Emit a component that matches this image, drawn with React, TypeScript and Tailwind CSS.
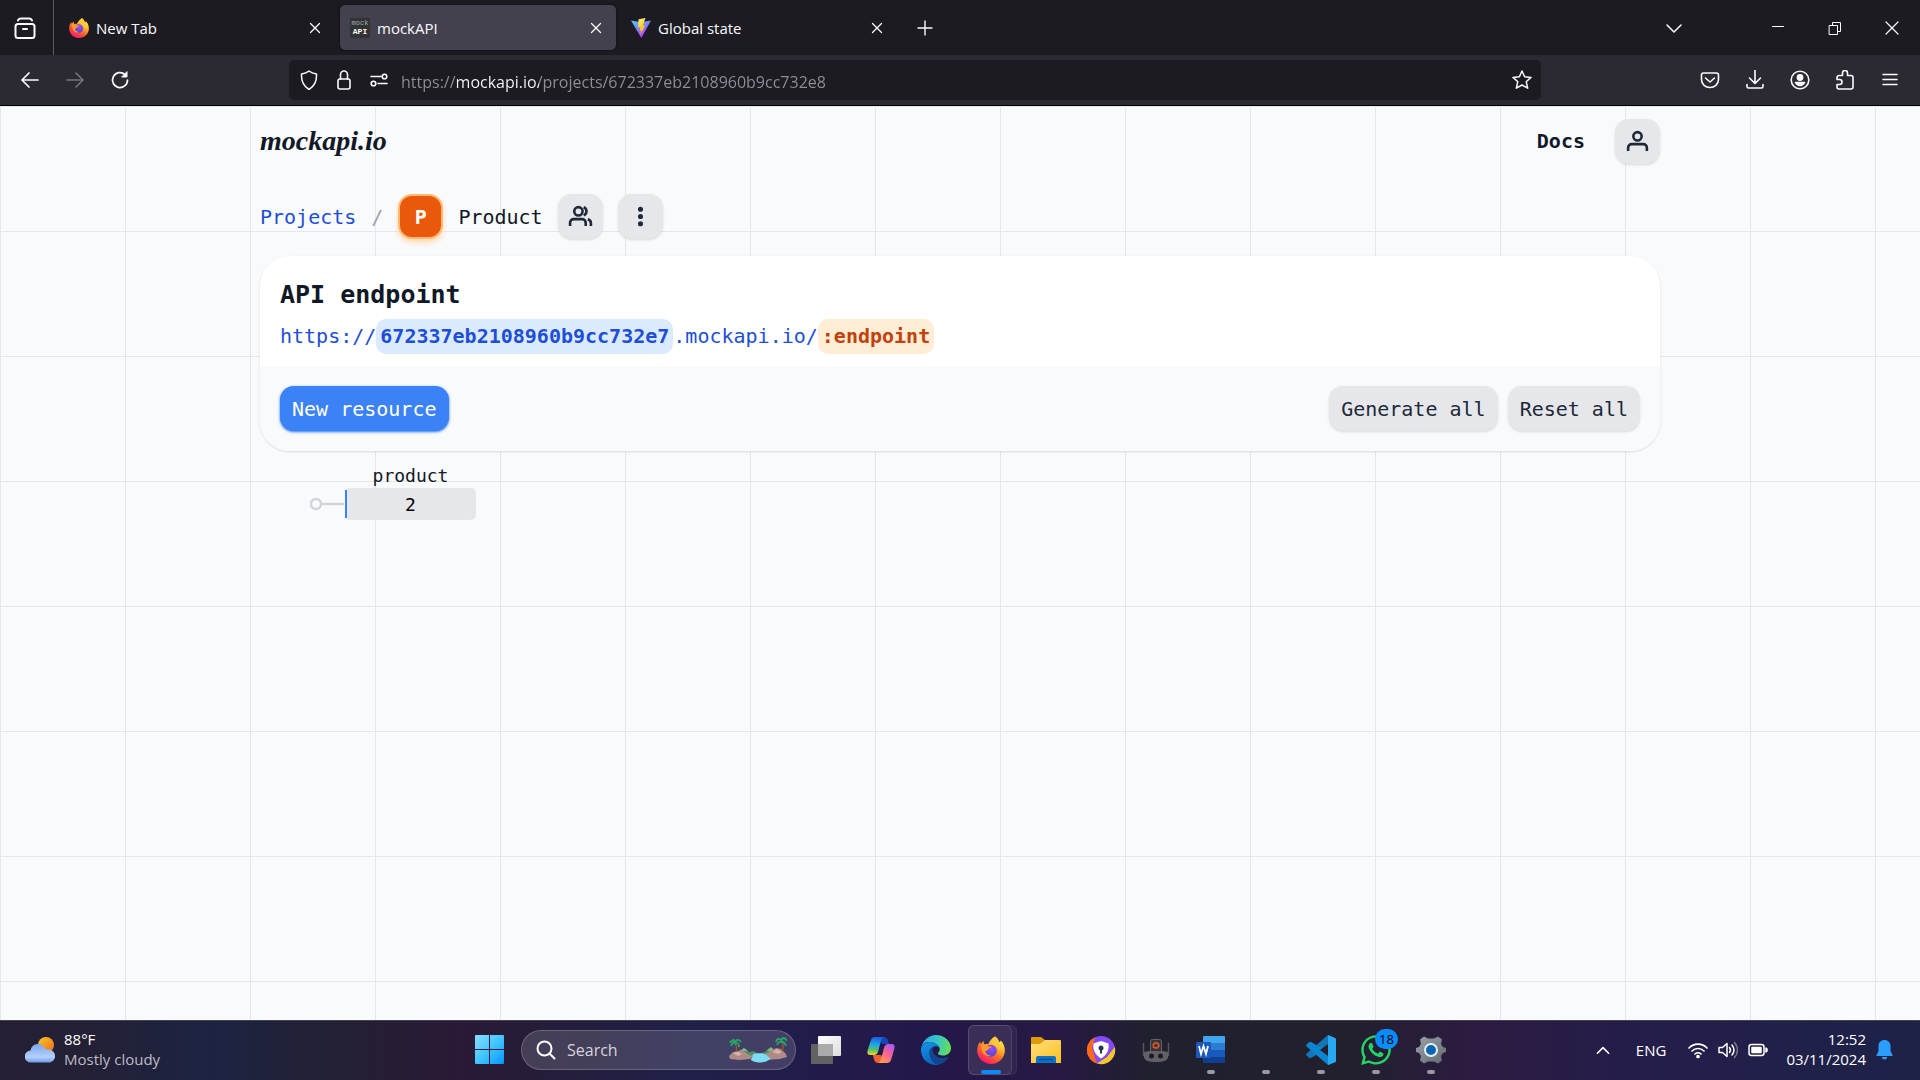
import type { ReactNode } from 'react';
import { FaWhatsapp } from 'react-icons/fa';

const ui = 'font-["Open_Sans","Noto_Sans",sans-serif]';
const mono = 'font-["DejaVu_Sans_Mono","Liberation_Mono",monospace]';

function Line({ children, className = 'size-5', width = 1.5 }: { children: ReactNode; className?: string; width?: number }) {
  return (
    <svg viewBox="0 0 20 20" className={className} fill="none" stroke="currentColor" strokeWidth={width} strokeLinecap="round" strokeLinejoin="round" aria-hidden="true">
      {children}
    </svg>
  );
}

function Firefox({ id, className }: { id: string; className: string }) {
  return (
    <svg viewBox="0 0 28 28" className={className} aria-hidden="true">
      <defs>
        <linearGradient id={`${id}-a`} x1="0.8" y1="0.05" x2="0.25" y2="0.95">
          <stop offset="0" stopColor="#fff44f" />
          <stop offset="0.3" stopColor="#ffbd2e" />
          <stop offset="0.6" stopColor="#ff6a2a" />
          <stop offset="1" stopColor="#f5156c" />
        </linearGradient>
        <radialGradient id={`${id}-b`} cx="0.55" cy="0.3" r="0.7">
          <stop offset="0" stopColor="#a347f5" />
          <stop offset="1" stopColor="#4a4ad0" />
        </radialGradient>
      </defs>
      <path fill={`url(#${id}-a)`} d="M18 0.5c2.400 1.400 3.600 3.400 4 5.600 1.200-.2 1.600-1 1.800-1.600C26.600 7.500 28 11 27.800 15 27.500 22.200 21.600 28 14 28 6.200 28 .2 22 .2 14.600.2 11 1.300 8.200 3.200 5.600L3.600 8.200 6.400 5 7.200 8.400c1.200-.4 2.600-.6 4-.2 1.400-2.800 3.200-5.800 6.800-7.700z" />
      <circle cx="13.800" cy="14.800" r="6" fill={`url(#${id}-b)`} />
      <path fill="#ff9a2a" d="M4.200 8.600c3-.8 5.400.2 7 1.800l3.400.2c-.4 1.400-2 2-3.400 2.400-.6 1.400-1.800 2-3 2.200.6 3 3.400 4.600 6.200 4.200-4.800 2.400-10.600-1-10.200-10.800z" />
      <path fill="#ffc83a" d="M18 .5c2.400 1.400 3.600 3.600 4 6.200 1.200 2.200 1.600 5.600.2 8.600-.6-3.400-2.200-5.200-4.800-6.600-3-1.600-2-5.400.6-8.200z" />
    </svg>
  );
}

function Vite() {
  return (
    <svg viewBox="0 0 20 20" className="size-5" aria-hidden="true">
      <defs>
        <linearGradient id="vite-a" x1="0" y1="0" x2="0.6" y2="1">
          <stop offset="0" stopColor="#41d1ff" />
          <stop offset="1" stopColor="#bd34fe" />
        </linearGradient>
        <linearGradient id="vite-b" x1="0.4" y1="0" x2="0.6" y2="1">
          <stop offset="0" stopColor="#ffea83" />
          <stop offset="0.3" stopColor="#ffdd35" />
          <stop offset="1" stopColor="#ffa800" />
        </linearGradient>
      </defs>
      <path fill="url(#vite-a)" d="M0 2.500 10 4.200 20 2.500 10.300 20z" />
      <path fill="url(#vite-b)" d="M14.500 0 7.600 1.300 7 9.600l2.400-.5-.8 4 1.600-.5-1 4.400 4.900-9.500-2.400.4z" />
    </svg>
  );
}

function Tab({ icon, title, active = false }: { icon: ReactNode; title: string; active?: boolean }) {
  return (
    <div className={`flex h-[45px] w-[276px] items-center rounded-[5px] pr-2.5 pl-2.5 ${active ? 'bg-[#42414d] shadow-[0_0_3px_rgba(0,0,0,0.6)]' : ''}`}>
      <button type="button" className="flex min-w-0 flex-1 items-center gap-[7px] text-left text-[15px] leading-5">
        {icon}
        <span>{title}</span>
      </button>
      <button type="button" aria-label={`Close ${title}`} className="flex size-5 items-center justify-center">
        <Line className="size-5" width={1.300}><path d="m5.500 5.500 9 9m0-9-9 9" /></Line>
      </button>
    </div>
  );
}

function Chrome() {
  return (
    <header className={`${ui} border-b border-black bg-[#2b2a33] text-[#fbfbfe]`}>
      <div className="flex h-[55px] items-center bg-[#1c1b22]">
        <button type="button" aria-label="Firefox View" className="flex h-full w-[54px] items-center justify-center border-r border-[#5b5a63] pr-1">
          <svg viewBox="0 0 22 22" className="size-[22px]" fill="none" stroke="currentColor" strokeWidth="2" strokeLinecap="round" aria-hidden="true">
            <rect x="1.500" y="7" width="19" height="14" rx="2.500" />
            <path d="M4 3.500C4.500 2 5.500 1.500 7 1.500h8c1.500 0 2.500.5 3 2M9 12h4" />
          </svg>
        </button>
        <div className="flex flex-1 items-center gap-[5px] pl-[5px]">
          <Tab title="New Tab" icon={<Firefox id="tab-fox" className="size-5" />} />
          <Tab
            title="mockAPI"
            active
            icon={
              <span className="flex size-5 flex-col items-center justify-center bg-[#333] font-['Liberation_Mono',monospace] text-[8px] leading-[9px]">
                <span className="text-[7px] leading-[8px] text-[#9bb0b8]">mock</span>
                <b>API</b>
              </span>
            }
          />
          <Tab title="Global state" icon={<Vite />} />
          <button type="button" aria-label="New tab" className="ml-2 flex size-[30px] items-center justify-center">
            <Line width={1.400}><path d="M10 3v14M3 10h14" /></Line>
          </button>
        </div>
        <button type="button" aria-label="List all tabs" className="mr-[55px] flex w-10 justify-center">
          <Line><path d="m3 7 7 7 7-7" /></Line>
        </button>
        <button type="button" aria-label="Minimize" className="flex w-[57px] justify-center">
          <Line className="size-5" width={1}><path d="M4.500 8.500h11" /></Line>
        </button>
        <button type="button" aria-label="Restore" className="flex w-[57px] justify-center">
          <Line width={1}><path d="M4.500 7.500h8v9h-8zM7.500 7.500v-3h8v9h-3" /></Line>
        </button>
        <button type="button" aria-label="Close window" className="flex w-[57px] justify-center">
          <Line width={1.200}><path d="m4 4 12 12M16 4 4 16" /></Line>
        </button>
      </div>
      <div className="flex h-[50px] items-center">
        <nav className="flex w-[289px] items-center gap-[25px] pl-5" aria-label="History">
          <button type="button" aria-label="Back"><Line width={1.700}><path d="M18 10H2m7-7-7 7 7 7" /></Line></button>
          <button type="button" aria-label="Forward" className="text-[#77767e]"><Line><path d="M2 10h16m-7-7 7 7-7 7" /></Line></button>
          <button type="button" aria-label="Reload"><Line width={1.700}><path d="M15 4.500A7.500 7.500 0 1 0 17.500 10" /><path fill="currentColor" d="M17 2v5h-5z" strokeWidth="1" /></Line></button>
        </nav>
        <div className="flex h-10 flex-1 items-center rounded-[5px] bg-[#1c1b22] pr-[9px] pl-2.5">
          <div className="flex gap-[15px]">
            <Line><path d="M10 1c2 1.700 4.500 2.500 7.500 3 .3 6-1.500 12-7.500 15.500C4 16 2.200 10 2.500 4 5.500 3.500 8 2.700 10 1z" /></Line>
            <Line width={1.600}><rect x="4" y="9" width="12" height="10" rx="2" /><path d="M6.500 9V4.500a3.500 3.500 0 0 1 7 0V9" /></Line>
            <Line width={1.600}><path d="M2 6.500h10M18 13.500H9" /><circle cx="15.500" cy="6.500" r="2.300" /><circle cx="4.500" cy="13.500" r="2.300" /></Line>
          </div>
          <input
            aria-label="Address"
            defaultValue="https://mockapi.io/projects/672337eb2108960b9cc732e8"
            className="ml-3 min-w-0 flex-1 bg-[linear-gradient(90deg,#8f8f98_56px,#fbfbfe_56px,#fbfbfe_138px,#8f8f98_138px)] bg-clip-text pt-[3px] text-base leading-5 text-transparent outline-none"
          />
          <button type="button" aria-label="Bookmark this page">
            <Line><path d="m10 1 2.600 5.800 6.400.6-4.800 4.300 1.500 6.500L10 15l-5.700 3.200 1.500-6.500L1 7.400l6.400-.6z" /></Line>
          </button>
        </div>
        <div className="flex w-[379px] justify-end gap-[25px] pr-5">
          <button type="button" aria-label="Save to Pocket"><Line width={1.600}><path d="M3.500 3h13c1 0 2 .8 2 2v4.500c0 5-4 8-8.500 8s-8.500-3-8.500-8V5c0-1.200 1-2 2-2z" /><path d="m5.500 8 4.500 4 4.500-4" /></Line></button>
          <button type="button" aria-label="Downloads"><Line width={1.600}><path d="M10 0v13M4.500 8 10 13.500 15.500 8M2 14.500v2c0 1 .5 1.500 1.500 1.500h13c1 0 1.500-.5 1.500-1.500v-2" /></Line></button>
          <button type="button" aria-label="Account"><Line width={1.600}><circle cx="10" cy="10" r="8.800" /><circle cx="10" cy="7.500" r="2.600" fill="currentColor" /><path fill="currentColor" d="M5.500 12.500h9c-1 2.200-2.700 3-4.500 3s-3.500-.8-4.500-3z" /></Line></button>
          <button type="button" aria-label="Extensions"><Line width={1.600}><path d="M4 5.500h3.500V3a2.500 2.500 0 0 1 5 0v2.500H16a2 2 0 0 1 2 2V17a2 2 0 0 1-2 2H4a2 2 0 0 1-2-2v-2.500h2.500a2 2 0 0 0 0-5H2v-2a2 2 0 0 1 2-2z" /></Line></button>
          <button type="button" aria-label="Menu"><Line width={1.500}><path d="M3 4.500h14M3 9.500h14M3 14.500h14" /></Line></button>
        </div>
      </div>
    </header>
  );
}

function SquareButton({ label, children }: { label: string; children: ReactNode }) {
  return (
    <button type="button" aria-label={label} className="flex size-[45px] shrink-0 items-center justify-center rounded-[14px] bg-[#e5e7eb] text-[#1f2937] shadow">
      <svg viewBox="0 0 24 24" className="size-[25px]" fill="none" stroke="currentColor" strokeWidth="2.500" aria-hidden="true">
        {children}
      </svg>
    </button>
  );
}

function GrayButton({ children }: { children: string }) {
  return <button type="button" className="h-[45px] rounded-[14px] bg-[#e5e7eb] px-3 text-[#1f2937] shadow">{children}</button>;
}

function Page() {
  return (
    <main className={`${mono} flex-1 bg-[#f9fafc] bg-[linear-gradient(to_right,#e5e7eb_1px,transparent_1px),linear-gradient(to_bottom,#e5e7eb_1px,transparent_1px)] bg-[size:125px_125px] text-[20px] leading-[30px] text-[#111827]`}>
      <div className="mx-auto max-w-[1400px]">
        <div className="flex h-[70px] items-center justify-between">
          <a href="#home" className="font-['Liberation_Serif',serif] text-[28px] leading-9 font-bold italic">mockapi.io</a>
          <nav className="flex items-center gap-[30px]">
            <a href="#docs" className="font-bold">Docs</a>
            <SquareButton label="Profile">
              <circle cx="12" cy="7" r="4" />
              <path d="M3 21v-3a3.500 3.500 0 0 1 3.500-3.500h11a3.500 3.500 0 0 1 3.500 3.500v3" />
            </SquareButton>
          </nav>
        </div>
        <div className="flex items-center gap-[15px] pt-[18px] pb-[17px]">
          <a href="#projects" className="text-[#1d4ed8]">Projects</a>
          <span className="text-[#9ca3af]">/</span>
          <span className="flex size-[45px] items-center justify-center rounded-[14px] border-2 border-[#fdba74] bg-[#ea580c] font-bold text-white shadow-md shadow-[#fed7aa]">P</span>
          <span>Product</span>
          <SquareButton label="Collaborators">
            <circle cx="10" cy="7" r="4" />
            <path d="M2 21v-3a3.500 3.500 0 0 1 3.500-3.500h8A3.500 3.500 0 0 1 17 18v3M15 3.200a4 4 0 0 1 0 7.600M19 14.700a4 4 0 0 1 3 3.800V21" />
          </SquareButton>
          <SquareButton label="More options">
            <circle cx="12" cy="5" r="1.200" />
            <circle cx="12" cy="12" r="1.200" />
            <circle cx="12" cy="19" r="1.200" />
          </SquareButton>
        </div>
        <section className="overflow-hidden rounded-[30px] bg-white shadow">
          <div className="px-5 pt-[21px] pb-3">
            <h1 className="mb-[7px] text-[25px] leading-[35px] font-bold">API endpoint</h1>
            <p className="flex items-center leading-[35px] text-[#1d4ed8]">
              <span>https://</span>
              <b className="rounded-[10px] bg-[#dbeafe] px-1">672337eb2108960b9cc732e7</b>
              <span>.mockapi.io/</span>
              <b className="rounded-[10px] bg-[#ffedd5] px-1 text-[#c2410c]">:endpoint</b>
            </p>
          </div>
          <div className="flex gap-2.5 bg-[#f9fafc] p-5">
            <button type="button" className="mr-auto h-[45px] rounded-[14px] bg-[#3b82f6] px-3 text-white shadow shadow-[#3b82f6]">New resource</button>
            <GrayButton>Generate all</GrayButton>
            <GrayButton>Reset all</GrayButton>
          </div>
        </section>
        <div className="flex items-end pt-[12px] pl-[50px] text-[18px] leading-[25px]">
          <svg viewBox="0 0 35 32" className="h-8 w-[35px]" fill="none" stroke="#d1d5db" strokeWidth="2.500" aria-hidden="true">
            <circle cx="6" cy="16" r="5" />
            <path d="M11 16h23" />
          </svg>
          <div className="flex w-[131px] flex-col text-center">
            <span>product</span>
            <button type="button" className="flex h-8 items-center rounded-[5px] bg-[#e5e7eb] text-black">
              <span className="h-7 w-0.5 bg-[#3b82f6]" />
              <span className="flex-1 pr-0.5">2</span>
            </button>
          </div>
        </div>
      </div>
    </main>
  );
}

function TaskbarApp({ label, dot = false, children }: { label: string; dot?: boolean; children?: ReactNode }) {
  return (
    <button type="button" aria-label={label} className="relative flex h-[50px] w-[55px] items-center justify-center">
      <svg viewBox="0 0 30 30" className="size-[30px]" aria-hidden="true">{children}</svg>
      {dot && <span className="absolute bottom-[1px] h-1 w-2 rounded-full bg-[#9a98a3]" />}
    </button>
  );
}

function Palms() {
  return (
    <svg viewBox="0 0 58 26" className="h-[26px] w-[58px]" aria-hidden="true">
      <path fill="#4f8f63" d="M10 16l5-5 5 4 5-1 4 3 7-2 4-4 6 4v6H10z" />
      <path fill="#7dbb88" d="M11 14l4-3 4 3zM38 14l4-4 4 4z" />
      <path fill="#b08a88" d="M0 19l4-4 3 1 4-3 5 2 4 3 4 1-3 3-11 1-9-1zM34 20l4-4 4-2 5-3 5 1 5 5 1 3-7 2-15 1z" />
      <path fill="#d9b3a6" d="M4 16l4-2 5 3-4 2zM43 15l5-3 5 3-4 2z" />
      <path fill="#7fdcf4" d="M24 17c3-1 9-1 12 0l5 4c2 1-3 4-9 4.500-6 0-11-2-10-3.500 2-1.500 1-3 2-5z" />
      <path d="M7 15C8 11 8 8 6 5M53 14c2-4 1-8-1-11" stroke="#96562e" strokeWidth="1.500" fill="none" />
      <path d="M1 6c1-3 4-3 5 0 1-4 4-4 6-1M2 9c1-3 3-4 4-3 2-1 4 0 4 4M6 5 4 2M47 5c1-4 4-4 5-1 1-4 4-4 6 0M48 8c1-3 3-4 4-3 2-1 4 1 5 4M52 4l2-3" stroke="#25a567" strokeWidth="1.800" fill="none" />
    </svg>
  );
}

function Taskbar() {
  return (
    <footer className={`${ui} grid h-[60px] grid-cols-[1fr_auto_1fr] items-center border-t border-[#43434e] bg-[linear-gradient(90deg,#241f33_0%,#242035_4%,#1c2342_11%,#242033_18%,#291a37_24%,#241e3c_30%,#20204a_36%,#24184a_48%,#271944_55%,#20202e_60%,#22202d_70%,#2c1b42_77%,#241d49_85%,#21204a_92%,#1d2247_100%)] pb-0.5 text-[15px] leading-5 text-white`}>
      <button type="button" className="flex items-center gap-[9px] justify-self-start pl-[25px] text-left">
        <svg viewBox="0 0 30 26" className="h-[26px] w-[30px]" aria-hidden="true">
          <defs>
            <linearGradient id="sun" x1="0" y1="0" x2="1" y2="1"><stop offset="0" stopColor="#f8c62d" /><stop offset="1" stopColor="#ee6a16" /></linearGradient>
            <linearGradient id="cloud" x1="0" y1="0" x2="0" y2="1"><stop offset="0" stopColor="#7ca5f0" /><stop offset="0.7" stopColor="#b4d0fb" /><stop offset="1" stopColor="#6f9bec" /></linearGradient>
          </defs>
          <circle cx="21" cy="8" r="8" fill="url(#sun)" />
          <path fill="url(#cloud)" d="M6 25.500a6 6 0 0 1-.5-12C6.500 9 9.500 7 13 7c4 0 6.500 2.500 7.500 5.500 5-1 9.500 2 9.500 6.500 0 4-3 6.500-6 6.500z" />
        </svg>
        <span className="flex flex-col pb-0.5">
          <span>88°F</span>
          <span className="text-[#bdbbc4]">Mostly cloudy</span>
        </span>
      </button>
      <nav className="flex items-center" aria-label="Taskbar">
        <button type="button" aria-label="Start" className="mr-[17px] ml-[13px]">
          <svg viewBox="0 0 29 29" className="size-[29px]" aria-hidden="true">
            <defs><linearGradient id="win" x1="0" y1="0" x2="1" y2="1"><stop offset="0" stopColor="#86e0ff" /><stop offset="0.5" stopColor="#42c5ff" /><stop offset="1" stopColor="#0794ff" /></linearGradient></defs>
            <path fill="url(#win)" d="M0 1q0-1 1-1h13v14H0zM15 0h13q1 0 1 1v13H15zM0 15h14v14H1q-1 0-1-1zM15 15h14v13q0 1-1 1H15z" />
          </svg>
        </button>
        <label className="mr-0.5 flex h-10 w-[275px] items-center rounded-full border border-white/20 bg-white/15 pr-2 pl-3.5">
          <Line className="size-5 shrink-0" width={2}><circle cx="8.500" cy="8.500" r="7" /><path d="m13.500 13.500 5 5" /></Line>
          <input type="search" placeholder="Search" aria-label="Search" className="ml-[11px] w-full min-w-0 flex-1 text-base leading-5 outline-none placeholder:text-[#d6d4de]" />
          <Palms />
        </label>
        <TaskbarApp label="Task view">
          <defs><linearGradient id="tv" x1="0" y1="0" x2="1" y2="1"><stop offset="0" stopColor="#fff" /><stop offset="1" stopColor="#ddd" /></linearGradient></defs>
          <rect x="7" y="1" width="23" height="20" rx="1" fill="url(#tv)" />
          <rect x="0" y="9" width="22" height="20" rx="1" fill="#626262" />
          <path fill="#aaa" d="M7 9h15v12H7z" />
        </TaskbarApp>
        <TaskbarApp label="Copilot">
          <defs>
            <linearGradient id="cp1" x1="0.3" y1="0" x2="0.2" y2="1"><stop offset="0" stopColor="#1b5fe0" /><stop offset="0.4" stopColor="#20a6e8" /><stop offset="0.7" stopColor="#50c46a" /><stop offset="1" stopColor="#ffd21e" /></linearGradient>
            <linearGradient id="cp2" x1="0.8" y1="0" x2="0.2" y2="1"><stop offset="0" stopColor="#a35cf5" /><stop offset="0.4" stopColor="#f15c9c" /><stop offset="1" stopColor="#ffa04a" /></linearGradient>
          </defs>
          <path fill="#1846b8" d="M13 2h5c3 0 4 3 5 7h-7z" />
          <path fill="url(#cp1)" d="M8 2h10c-3 1-3 5-5 11-1 5-2 7-5 7H4c-3 0-3-3-2-6l3-9q1-3 3-3z" />
          <path fill="#f0602c" d="M7 20h8l3 8h-6c-3 0-4-3-5-8z" />
          <path fill="url(#cp2)" d="M22 9h4c3 0 3 3 2 6l-3 10q-1 3-4 3h-9c3-1 3-5 5-11 1-5 2-8 5-8z" />
        </TaskbarApp>
        <TaskbarApp label="Edge">
          <defs>
            <linearGradient id="ed1" x1="0" y1="0.3" x2="1" y2="0.5"><stop offset="0" stopColor="#2aa9ea" /><stop offset="0.5" stopColor="#35c5c8" /><stop offset="1" stopColor="#66df55" /></linearGradient>
            <linearGradient id="ed2" x1="0" y1="0" x2="0.5" y2="1"><stop offset="0" stopColor="#1597e5" /><stop offset="1" stopColor="#0b62bd" /></linearGradient>
          </defs>
          <path fill="url(#ed1)" d="M.5 12C2 5 8 0 15 0c9 0 15 7 15 13 0 5-4 7.500-8 7.500-3 0-5.500-1-5-2.500 1.500-1.500 2-3 1.500-5C17 9 12 7 8 7 4 7 1.500 9 .5 12z" />
          <path fill="url(#ed2)" d="M0 15c0-5 4-8 9-8 5 0 9 3 9.500 6-1-1.500-3-2-5-1.500-6 2-6 9-2.500 13.500 2 3 5 4.500 8 4.500C9 32 0 25 0 15z" />
          <path fill="#10458f" d="M8.500 17c0-3 2-5 4.500-5.500-2 2-1.500 5 0 7.500 3 4.500 9 5 14 2.500C27 25 21 30 16 29.500 11 27 8.500 22 8.500 17z" />
        </TaskbarApp>
        <button type="button" aria-label="Firefox" className="relative flex h-[50px] w-[55px] items-center justify-center">
          <span className="absolute inset-y-0 left-[5px] w-[49px] rounded-md border border-white/5 bg-white/5" />
          <span className="absolute inset-y-0 left-[5px] w-11 rounded-md border border-white/10 bg-white/5" />
          <Firefox id="task-fox" className="relative size-7" />
          <span className="absolute bottom-[1px] h-1 w-5 rounded-full bg-[#0b8bff]" />
        </button>
        <TaskbarApp label="File Explorer">
          <defs><linearGradient id="fe" x1="0" y1="0" x2="1" y2="1"><stop offset="0" stopColor="#ffdf79" /><stop offset="1" stopColor="#fcc022" /></linearGradient></defs>
          <path fill="#dd9a0a" d="M0 3q0-1 1-1h9l4 3v4H0z" />
          <path fill="url(#fe)" d="M0 9h9l5-4h15q1 0 1 1v22H0z" />
          <path fill="#0b74c8" d="M5 28v-5q0-2 2-2h16q2 0 2 2v5z" />
          <path stroke="#064c8d" strokeWidth="1.500" d="M8 24.500h14" />
        </TaskbarApp>
        <TaskbarApp label="Secure Browser">
          <circle cx="15" cy="15" r="14" fill="#854af4" />
          <path fill="#ff6a13" d="M9 2.300A14 14 0 0 0 11 28.500L8 20 6 13z" />
          <path fill="#f6c62a" d="M28.800 12A14 14 0 0 1 11 28.500L21 22z" />
          <path fill="#fff" d="M15 6l7.500 2.500c.8 6-1 11-7.500 15-6.500-4-8.300-9-7.500-15z" />
          <circle cx="15" cy="13" r="2.500" fill="#27364d" />
          <path stroke="#27364d" strokeWidth="2" d="M15 13v5.500" />
        </TaskbarApp>
        <TaskbarApp label="Robot utility">
          <path fill="none" stroke="#55555c" strokeWidth="1.500" d="M2.500 8v13M27.500 8v13" />
          <path fill="#333238" stroke="#66666d" d="M9.500 17V6.500q0-2 2-2h7q2 0 2 2V17z" />
          <circle cx="15" cy="10.500" r="2.500" fill="none" stroke="#d7592b" strokeWidth="1.500" />
          <circle cx="15" cy="10.500" r="3.600" fill="none" stroke="#d7592b" strokeDasharray="1.200 1.600" />
          <path fill="#606066" d="M3 17l5-1h14l5 1v5c0 3-4 5-12 5S3 25 3 22z" />
          <circle cx="10.500" cy="21" r="2.500" fill="#1c1b24" />
          <circle cx="19.500" cy="21" r="2.500" fill="#1c1b24" />
        </TaskbarApp>
        <TaskbarApp label="Word" dot>
          <path fill="#41a5ee" d="M7 2q0-1 1-1h20q1 0 1 1v6H7z" />
          <path fill="#2b7cd3" d="M7 8h22v7H7z" />
          <path fill="#185abd" d="M7 15h22v7H7z" />
          <path fill="#103f91" d="M7 22h22v5q0 1-1 1H8q-1 0-1-1z" />
          <rect y="7" width="15" height="16" rx="1" fill="#1c58bc" />
          <path d="m3 11 2 8 2.500-8 2.500 8 2-8" fill="none" stroke="#fff" strokeWidth="1.800" />
        </TaskbarApp>
        <TaskbarApp label="Background app" dot />
        <TaskbarApp label="Visual Studio Code" dot>
          <path fill="#1475b8" d="M22 0l8 3.500v5L5 23q-1 .6-2-.2L.6 20.500q-1-1 0-2z" />
          <path fill="#0c85cf" d="M22 30l8-3v-6L5 7q-1-.6-2 .2L.6 9.500q-1 1 0 2z" />
          <path fill="#29a8f2" d="M22 30V0l7 3q1 .5 1 1.500v21q0 1-1 1.500z" />
          <path fill="#211f2e" d="M22 9v12L14 15z" />
        </TaskbarApp>
        <button type="button" aria-label="WhatsApp" className="relative flex h-[50px] w-[55px] items-center justify-center">
          <FaWhatsapp className="size-[34px] text-[#25d366]" aria-hidden="true" />
          <span className="absolute top-1 right-[5px] flex h-5 w-[23px] items-center justify-center rounded-full bg-[#0a8cff] text-[13px] leading-4 text-black">18</span>
          <span className="absolute bottom-[1px] h-1 w-2 rounded-full bg-[#9a98a3]" />
        </button>
        <TaskbarApp label="Settings" dot>
          <defs><linearGradient id="gear" x1="0" y1="0" x2="1" y2="1"><stop offset="0" stopColor="#98a1a8" /><stop offset="1" stopColor="#626a70" /></linearGradient></defs>
          <path fill="url(#gear)" d="M8 1.500l4 2h6l4-2 4 3-1 4.500 2 3 3 1v4l-3 1-2 3 1 4.500-4 3-4-2h-6l-4 2-4-3 1-4.500-2-3-3-1v-4l3-1 2-3-1-4.500z" />
          <circle cx="15" cy="15" r="6" fill="#0966b7" stroke="#eee" strokeWidth="2" />
        </TaskbarApp>
      </nav>
      <div className="flex items-center justify-self-end pr-[27px]">
        <button type="button" aria-label="Show hidden icons" className="mr-[25px]"><Line className="size-4" width={2}><path d="m3 14 7-7 7 7" /></Line></button>
        <span className="mr-[22px] text-[15px]">ENG</span>
        <button type="button" aria-label="Network, sound and battery" className="mr-[18px] flex items-center gap-[10px]">
          <Line width={1.700}><path d="M1 8a12.500 12.500 0 0 1 18 0M4 11a8.500 8.500 0 0 1 12 0M7 14a4.300 4.300 0 0 1 6 0" /><circle cx="10" cy="16.500" r="1" fill="currentColor" /></Line>
          <Line><path d="M1 7.500h3.500L9 3.500v13l-4.500-4H1zM11.500 7.500q2 2.500 0 5M14 5q4 5 0 10" /><path stroke="#77758a" d="M16.500 2.500q6 7.500 0 15" /></Line>
          <Line><rect x="1" y="4.500" width="15" height="11" rx="2.500" /><path fill="currentColor" d="M4 7.500h9v5H4zM18 8v4l1-1V9z" /></Line>
        </button>
        <button type="button" className="flex flex-col pb-0.5 text-right text-[15px]">
          <span>12:52</span>
          <span>03/11/2024</span>
        </button>
        <button type="button" aria-label="Notifications" className="ml-2.5 text-[#2b9dff]">
          <svg viewBox="0 0 17 20" className="h-5 w-[17px]" fill="currentColor" aria-hidden="true"><path d="M8.500 0C12 0 14.500 2.500 14.500 6v5l2 4v1H.5v-1l2-4V6C2.500 2.500 5 0 8.500 0zM5.500 17h6q-1 2.500-3 2.500t-3-2.500z" /></svg>
        </button>
      </div>
    </footer>
  );
}

export default function App() {
  return (
    <div className="flex min-h-screen flex-col">
      <Chrome />
      <Page />
      <Taskbar />
    </div>
  );
}
